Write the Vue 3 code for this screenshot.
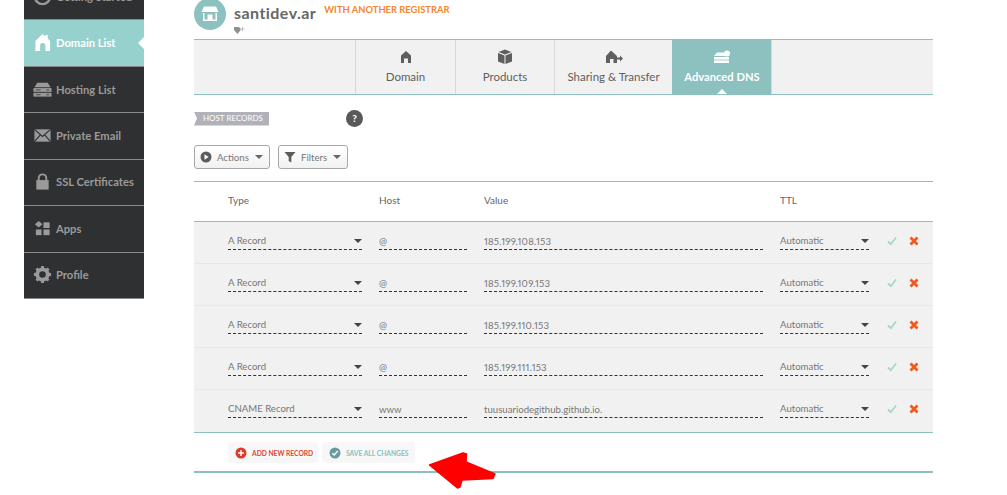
<script setup>
const nav = [
  { label: 'Getting Started', icon: 'clock' },
  { label: 'Domain List', icon: 'home', active: true },
  { label: 'Hosting List', icon: 'server' },
  { label: 'Private Email', icon: 'mail' },
  { label: 'SSL Certificates', icon: 'lock' },
  { label: 'Apps', icon: 'apps' },
  { label: 'Profile', icon: 'gear' },
]
const tabs = [
  { label: 'Domain', w: 100, icon: 'home' },
  { label: 'Products', w: 99, icon: 'box' },
  { label: 'Sharing & Transfer', w: 118, icon: 'share' },
  { label: 'Advanced DNS', w: 100, icon: 'dns', active: true },
]
const rows = [
  { type: 'A Record', host: '@', value: '185.199.108.153', ip: true },
  { type: 'A Record', host: '@', value: '185.199.109.153', ip: true },
  { type: 'A Record', host: '@', value: '185.199.110.153', ip: true },
  { type: 'A Record', host: '@', value: '185.199.111.153', ip: true },
  { type: 'CNAME Record', host: 'www', value: 'tuusuariodegithub.github.io.' },
]
</script>

<template>
  <div class="page">
    <aside class="sidebar">
      <a v-for="n in nav" :key="n.label" class="nav-item" :class="{ active: n.active }">
        <svg class="nav-icon" viewBox="0 0 20 20">
          <g v-if="n.icon === 'clock'"><circle cx="10" cy="10" r="8" fill="none" stroke="currentColor" stroke-width="2.5" /></g>
          <path v-else-if="n.icon === 'home'" d="M10 1 L13 3.6 V2 H15.5 V5.8 L18 8.5 V19 H13 V13 Q13 10.5 10.2 10.5 Q7.5 10.5 7.5 13 V19 H2.5 V8.5 Z" fill="currentColor" />
          <g v-else-if="n.icon === 'server'">
            <path d="M4.5 3 H15.5 L18.5 7.5 H1.5 Z" fill="currentColor" />
            <rect x="0.5" y="8.5" width="19" height="4" fill="currentColor" />
            <rect x="0.5" y="13.5" width="19" height="4" fill="currentColor" />
            <path d="M3 10.5 H8 M3 15.5 H8 M14 10.5 H17 M14 15.5 H17" stroke="#2f3032" stroke-width="0.8" />
          </g>
          <g v-else-if="n.icon === 'mail'">
            <rect x="1.5" y="3.5" width="17" height="13" fill="currentColor" />
            <path d="M1.5 3.5 L10 11 L18.5 3.5 M1.5 16.5 L7.5 9.5 M18.5 16.5 L12.5 9.5" fill="none" stroke="#2f3032" stroke-width="1.2" />
          </g>
          <g v-else-if="n.icon === 'lock'">
            <path d="M6 9 V6.5 a4 4 0 0 1 8 0 V9" fill="none" stroke="currentColor" stroke-width="2" />
            <rect x="3.5" y="8.5" width="13" height="10" fill="currentColor" />
          </g>
          <g v-else-if="n.icon === 'apps'" fill="currentColor">
            <path d="M6 2 L10 5.5 L6 9 L2 5.5 Z" />
            <rect x="11" y="3.5" width="6.5" height="6" />
            <rect x="3" y="11" width="6" height="6" />
            <rect x="11" y="11" width="6.5" height="6" />
          </g>
          <g v-else>
            <circle cx="10" cy="10" r="5.5" fill="none" stroke="currentColor" stroke-width="4" />
            <path d="M10 1 V19 M1 10 H19 M3.6 3.6 L16.4 16.4 M16.4 3.6 L3.6 16.4" stroke="currentColor" stroke-width="3" stroke-dasharray="3.5 11 3.5" />
          </g>
        </svg>
        <span>{{ n.label }}</span>
      </a>
    </aside>

    <main class="main">
      <header class="head">
        <div class="avatar">
          <svg viewBox="0 0 20 20" width="20" height="20">
            <path d="M4 2.5 H16 L18.5 8 H1.5 Z" fill="#fff" />
            <path d="M3 9 V17 H17 V9 H15.5 V15.5 H12.5 V10.5 H7.5 V15.5 H4.5 V9 Z" fill="#fff" />
          </svg>
        </div>
        <div class="head-text">
          <div class="title-row">
            <span class="title">santidev.ar</span>
            <span class="registrar">WITH ANOTHER REGISTRAR</span>
          </div>
          <svg class="tag-plus" viewBox="0 0 11 9" width="11" height="9">
            <path d="M0 1 H5 L7 3.5 L3.5 8 L0 4 Z" fill="#8f8f8f" />
            <path d="M8.5 1 V5 M6.5 3 H10.5" stroke="#bbb" stroke-width="1" />
          </svg>
        </div>
      </header>

      <nav class="tabs">
        <a v-for="t in tabs" :key="t.label" class="tab" :class="{ active: t.active }" :style="{ width: t.w + 'px' }">
          <svg class="tab-icon" viewBox="0 0 18 16" width="18" height="16">
            <path v-if="t.icon === 'home'" d="M9 2 L14 6.5 V14 H11 V9.5 H7 V14 H4 V6.5 Z" fill="currentColor" />
            <g v-else-if="t.icon === 'box'" fill="currentColor">
              <path d="M9 0.5 L15.5 3 L9 5.5 L2.5 3 Z" />
              <path d="M2 4 L8.5 6.5 V15 L2 12.5 Z" />
              <path d="M16 4 L9.5 6.5 V15 L16 12.5 Z" />
            </g>
            <g v-else-if="t.icon === 'share'" fill="currentColor">
              <path d="M6 1.5 L12 7 V14 H8.5 V10 H5 V14 H1 V7 Z" />
              <path d="M10 8.5 H15 V6.5 L18 9.5 L15 12.5 V10.5 H10 Z" />
            </g>
            <g v-else fill="currentColor">
              <path d="M4 3.5 H11 L13 7 H1 Z" />
              <rect x="1" y="8" width="15" height="2.6" />
              <rect x="1" y="11.4" width="15" height="2.6" />
              <circle cx="14" cy="4.5" r="3" />
            </g>
          </svg>
          <span>{{ t.label }}</span>
        </a>
      </nav>

      <div class="section-row">
        <span class="ribbon">HOST RECORDS</span>
        <span class="help">?</span>
      </div>

      <div class="toolbar">
        <button class="tool actions">
          <svg viewBox="0 0 12 12" width="12" height="12">
            <circle cx="6" cy="6" r="5.5" fill="#5c5c5c" />
            <path d="M4.5 3.3 L8.6 6 L4.5 8.7 Z" fill="#fff" />
          </svg>
          <span>Actions</span>
          <i class="caret"></i>
        </button>
        <button class="tool filters">
          <svg viewBox="0 0 12 12" width="12" height="12">
            <path d="M0.5 1 H11.5 L7.3 6 V11.5 L4.7 10 V6 Z" fill="#5c5c5c" />
          </svg>
          <span>Filters</span>
          <i class="caret"></i>
        </button>
      </div>

      <div class="table">
        <div class="grid thead">
          <span>Type</span>
          <span>Host</span>
          <span>Value</span>
          <span>TTL</span>
        </div>
        <div v-for="(r, i) in rows" :key="i" class="grid row">
          <div class="field select"><span>{{ r.type }}</span><i class="caret dark"></i></div>
          <div class="field input"><span>{{ r.host }}</span></div>
          <div class="field input"><span :class="{ ip: r.ip }">{{ r.value }}</span></div>
          <div class="field select"><span>Automatic</span><i class="caret dark"></i></div>
          <div class="row-actions">
            <svg viewBox="0 0 10 10" width="10" height="10"><path d="M1 5.5 L3.8 8.2 L9 1.5" fill="none" stroke="#a8d4d0" stroke-width="1.8" /></svg>
            <svg viewBox="0 0 10 10" width="10" height="10"><path d="M1.5 1.5 L8.5 8.5 M8.5 1.5 L1.5 8.5" fill="none" stroke="#f4591c" stroke-width="2.8" /></svg>
          </div>
        </div>
      </div>

      <div class="footer">
        <button class="foot-btn add">
          <svg viewBox="0 0 12 12" width="12" height="12">
            <circle cx="6" cy="6" r="5.5" fill="#e0382b" />
            <path d="M6 3 V9 M3 6 H9" stroke="#fff" stroke-width="1.4" />
          </svg>
          <span>ADD NEW RECORD</span>
        </button>
        <button class="foot-btn save">
          <svg viewBox="0 0 12 12" width="12" height="12">
            <circle cx="6" cy="6" r="5.5" fill="#6a9a9e" />
            <path d="M3.3 6.2 L5.2 8 L8.7 4" fill="none" stroke="#fff" stroke-width="1.4" />
          </svg>
          <span>SAVE ALL CHANGES</span>
        </button>
      </div>
      <div class="end-line"></div>

      <svg class="arrow" viewBox="0 0 70 40" width="70" height="40">
        <path d="M1.5 14 L35 2 L38.5 3 L38 11 L67 23 L65 27.5 L34 29 L32 36 L29.5 37 Z" fill="#fe0000" stroke="#fe0000" stroke-width="1.5" stroke-linejoin="round" />
      </svg>
    </main>
  </div>
</template>

<style>
html, body { margin: 0; background: #fff; overflow: hidden; }
</style>

<style scoped>
.page {
  position: relative;
  display: flex;
  align-items: flex-start;
  width: 1007px;
  height: 495px;
  overflow: hidden;
  font-family: Lato, "Open Sans", sans-serif;
  color: #666;
}
.sidebar {
  margin: -26px 0 0 24px;
  width: 120px;
  flex: none;
  background: #2f3032;
}
.nav-item {
  display: flex;
  align-items: center;
  gap: 4px;
  height: 44.43px;
  padding: 0 0 1px 9px;
  border-bottom: 1px solid #8a8a8a;
  color: #9a9a9a;
  font-size: 11.2px;
  font-weight: 700;
  box-sizing: content-box;
  position: relative;
}
.nav-item.active {
  background: #97d1cd;
  color: #fff;
}
.nav-item.active::after {
  content: "";
  position: absolute;
  right: 0;
  top: 17px;
  border: 6px solid transparent;
  border-right-color: #fff;
  border-left-width: 0;
}
.nav-icon { width: 19px; height: 19px; flex: none; }

.main {
  position: relative;
  margin-left: 50px;
  width: 739px;
  flex: none;
}
.head {
  display: flex;
  gap: 8px;
  height: 41px;
  margin-top: -2px;
}
.avatar {
  width: 32px;
  height: 32px;
  border-radius: 50%;
  background: #8cc1bf;
  display: flex;
  align-items: center;
  justify-content: center;
  flex: none;
}
.title-row { display: flex; gap: 8px; align-items: flex-start; height: 28px; }
.title {
  font-size: 16px;
  font-weight: 700;
  color: #666;
  line-height: 30px;
  letter-spacing: 0.45px;
}
.registrar {
  font-size: 9.4px;
  font-weight: 700;
  color: #f6862b;
  line-height: 24px;
}
.tag-plus { display: block; }

.tabs {
  display: flex;
  height: 54px;
  padding-left: 161px;
  background: #f1f1f1;
  border-top: 1px solid #8cc1bf;
  border-bottom: 1px solid #8cc1bf;
}
.tab {
  position: relative;
  box-sizing: border-box;
  display: flex;
  flex-direction: column;
  align-items: center;
  padding-top: 9px;
  gap: 5px;
  border-left: 1px solid #d8d8d8;
  font-size: 11.5px;
  font-weight: 400;
  color: #5f5f5f;
}
.tab:last-child { border-right: 1px solid #d8d8d8; }
.tab.active {
  background: #8cc1bf;
  color: #fff;
  font-weight: 700;
  font-size: 11.2px;
  border-left-color: #8cc1bf;
}
.tab.active::after {
  content: "";
  position: absolute;
  left: 50%;
  bottom: 0;
  margin-left: -5px;
  border: 5px solid transparent;
  border-bottom-color: #fff;
  border-top-width: 0;
}

.section-row {
  display: flex;
  align-items: center;
  height: 17px;
  margin-top: 15px;
}
.ribbon {
  box-sizing: border-box;
  width: 75px;
  height: 14px;
  background: #b1b1b9;
  color: #fff;
  font-size: 8px;
  line-height: 12px;
  padding-left: 9px;
  white-space: nowrap;
  clip-path: polygon(0 0, 100% 0, 100% 100%, 0 100%, 3px 50%);
}
.help {
  margin-left: 77px;
  width: 17px;
  height: 17px;
  border-radius: 50%;
  background: #58595b;
  color: #fff;
  font-size: 10px;
  font-weight: 900;
  line-height: 17px;
  text-align: center;
}

.toolbar {
  display: flex;
  gap: 8px;
  margin-top: 18px;
}
.tool {
  box-sizing: border-box;
  height: 24px;
  display: flex;
  align-items: center;
  padding: 0 0 0 5px;
  background: linear-gradient(#fff, #f1f1f1);
  border: 1px solid #a8a8a8;
  border-radius: 3px;
  font-family: inherit;
  font-size: 9.6px;
  color: #777;
}
.tool.actions { width: 76px; gap: 5px; }
.tool.filters { width: 70px; gap: 5px; }
.caret {
  display: inline-block;
  border: 4px solid transparent;
  border-top: 4px solid #666;
  border-bottom: 0;
  margin-left: 1px;
}
.caret.dark {
  position: absolute;
  right: 0;
  top: 8px;
  margin: 0;
  border-top-color: #444;
}

.table { margin-top: 12px; }
.grid {
  display: grid;
  grid-template-columns: 134px 88px 279px 89px auto;
  column-gap: 17px;
  padding-left: 34px;
  align-items: center;
}
.thead {
  height: 36px;
  padding-bottom: 3px;
  border-top: 1px solid #8cc1bf;
  border-bottom: 1px solid #8cc1bf;
  font-size: 10px;
  font-weight: 400;
  color: #666;
}
.row {
  box-sizing: border-box;
  height: 42px;
  background: #f1f1f1;
  border-bottom: 1px solid #e8e8e8;
  font-size: 9.6px;
  color: #777;
}
.row:last-child { border-bottom: 1px solid #8cc1bf; height: 43px; }
.field {
  position: relative;
  height: 18px;
  line-height: 20px;
  border-bottom: 1px dashed #333;
  margin-top: -5px;
  white-space: nowrap;
}
.field.input span { position: relative; top: 1px; }
.field.input .ip {
  font-variant-numeric: proportional-nums;
  letter-spacing: 0.2px;
}
.row-actions {
  display: flex;
  gap: 12px;
  margin-left: 1px;
  margin-top: -4px;
}

.footer {
  display: flex;
  gap: 4px;
  padding: 9px 0 0 34px;
  height: 29px;
  box-sizing: content-box;
}
.foot-btn {
  height: 21px;
  box-sizing: border-box;
  display: flex;
  align-items: center;
  gap: 5px;
  background: #f7f7f7;
  border: 0;
  border-radius: 3px;
  font-family: inherit;
  font-size: 6.7px;
  font-weight: 700;
  padding: 0 0 0 7px;
  white-space: nowrap;
}
.add { width: 90px; color: #d9483c; }
.save { width: 93px; color: #8cc1bf; }
.end-line { height: 2px; background: #8cc1bf; }

.arrow {
  position: absolute;
  left: 234px;
  top: 451px;
}
</style>
